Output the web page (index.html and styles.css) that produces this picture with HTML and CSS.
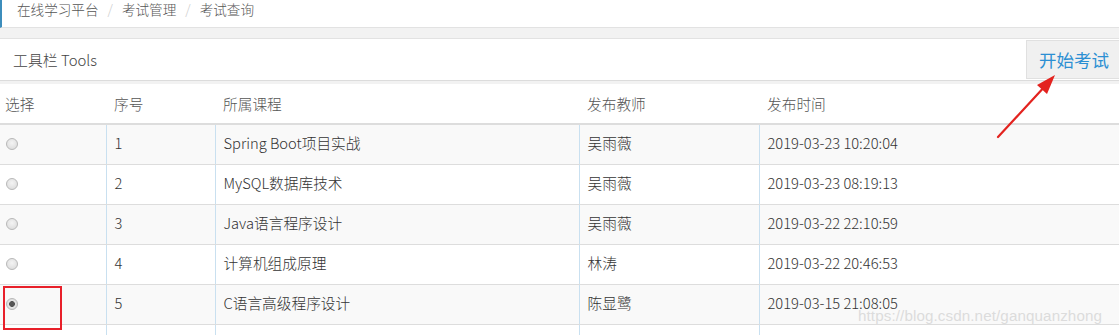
FILE: index.html
```html
<!DOCTYPE html>
<html lang="zh">
<head>
<meta charset="utf-8">
<link rel="stylesheet" href="styles.css">
</head>
<body>
<div class="page">
  <div class="crumbs">
    <span>在线学习平台</span><span class="sep">/</span><span>考试管理</span><span class="sep">/</span><span>考试查询</span>
  </div>
  <div class="gap"></div>
  <div class="toolbar">
    <span class="tb-title">工具栏 Tools</span>
    <button class="start">开始考试</button>
  </div>
  <div class="gap small"></div>
  <table class="grid">
    <colgroup>
      <col class="c1"><col class="c2"><col class="c3"><col class="c4"><col class="c5">
    </colgroup>
    <thead>
      <tr><th class="first">选择</th><th>序号</th><th>所属课程</th><th>发布教师</th><th>发布时间</th></tr>
    </thead>
    <tbody>
      <tr class="odd"><td class="first"><span class="radio"></span></td><td>1</td><td>Spring Boot项目实战</td><td>吴雨薇</td><td>2019-03-23 10:20:04</td></tr>
      <tr><td class="first"><span class="radio"></span></td><td>2</td><td>MySQL数据库技术</td><td>吴雨薇</td><td>2019-03-23 08:19:13</td></tr>
      <tr class="odd"><td class="first"><span class="radio"></span></td><td>3</td><td>Java语言程序设计</td><td>吴雨薇</td><td>2019-03-22 22:10:59</td></tr>
      <tr><td class="first"><span class="radio"></span></td><td>4</td><td>计算机组成原理</td><td>林涛</td><td>2019-03-22 20:46:53</td></tr>
      <tr class="odd"><td class="first"><span class="radio checked"></span></td><td>5</td><td>C语言高级程序设计</td><td>陈显鹭</td><td>2019-03-15 21:08:05</td></tr>
      <tr><td class="first"></td><td></td><td></td><td></td><td></td></tr>
    </tbody>
  </table>
  <div class="redbox"></div>
  <svg class="arrow" width="80" height="80" viewBox="0 0 80 80">
    <line x1="3" y1="66" x2="52" y2="13" stroke="#e3231f" stroke-width="2.2" stroke-linecap="round"/>
    <polygon points="60,4 42,14 52,23" fill="#e3231f"/>
  </svg>
  <div class="watermark">https://blog.csdn.net/ganquanzhong</div>
</div>
</body>
</html>
```
FILE: styles.css
```css
* { box-sizing: border-box; }
html, body { margin: 0; padding: 0; background: #fff; }
body {
  font-family: "Noto Sans CJK SC", "Noto Sans", sans-serif;
  font-weight: 300;
  color: #333;
  width: 1119px;
  height: 335px;
  overflow: hidden;
}
.page { position: relative; width: 1119px; height: 335px; overflow: hidden; }
.crumbs {
  height: 28px;
  border-left: 2px solid #3c8dbc;
  border-bottom: 1px solid #e2e2e2;
  padding-left: 15px;
  font-size: 13.6px;
  line-height: 18px;
  color: #555;
  display: flex;
  align-items: flex-start;
}
.crumbs .sep { color: #ccc; padding: 0 9px; }
.gap { height: 10px; background: #f2f2f2; }
.gap.small { height: 3px; }
.toolbar {
  height: 43px;
  border-top: 1px solid #e2e2e2;
  border-bottom: 1px solid #dcdcdc;
  display: flex;
  align-items: center;
  justify-content: space-between;
  padding-left: 13px;
}
.tb-title { font-size: 14.9px; color: #444; }
.start {
  align-self: flex-start;
  margin-top: 1px;
  height: 39px;
  width: 95px;
  margin-right: -2px;
  background: #f0f0f0;
  border: 1px solid #e0e0e0;
  color: #2c8fd3;
  font-family: inherit;
  font-weight: 400;
  font-size: 17.5px;
  padding: 0 0 0 12px;
  text-align: left;
}
.grid {
  width: 1119px;
  border-collapse: collapse;
  table-layout: fixed;
  font-size: 14.7px;
}
.c1 { width: 106px; }
.c2 { width: 109px; }
.c3 { width: 364px; }
.c4 { width: 180px; }
.c5 { width: 360px; }
.grid th {
  height: 40px;
  font-weight: 300;
  text-align: left;
  color: #555;
  padding: 0 0 0 8px;
  border-bottom: 2px solid #dddddd;
}
.grid td {
  height: 40px;
  padding: 0 0 3px 8px;
  color: #333;
  border-bottom: 1px solid #dddddd;
  border-left: 1px solid #c9e0f0;
}
.grid th.first, .grid td.first { padding-left: 5px; border-left: none; }
.grid tr.odd td { background: #f9f9f9; }
.radio {
  display: inline-block;
  width: 12px;
  height: 12px;
  border-radius: 50%;
  border: 1px solid #b9b9b9;
  background: radial-gradient(circle at 50% 40%, #f4f4f4, #d8d8d8);
  vertical-align: middle;
  margin-left: 1px;
  position: relative;
  top: -1px;
}
.radio.checked {
  background: radial-gradient(circle, #555 0 2.6px, #e6e6e6 3.2px, #d4d4d4);
}
.redbox {
  position: absolute;
  left: 3px;
  top: 286px;
  width: 59px;
  height: 44px;
  border: 2px solid #e8202a;
}
.arrow {
  position: absolute;
  left: 995px;
  top: 71px;
}
.watermark {
  position: absolute;
  left: 858px;
  top: 307px;
  font-family: "Liberation Sans", sans-serif;
  font-weight: 400;
  font-size: 15.2px;
  color: #dcdcdc;
  letter-spacing: 0.1px;
}
```
